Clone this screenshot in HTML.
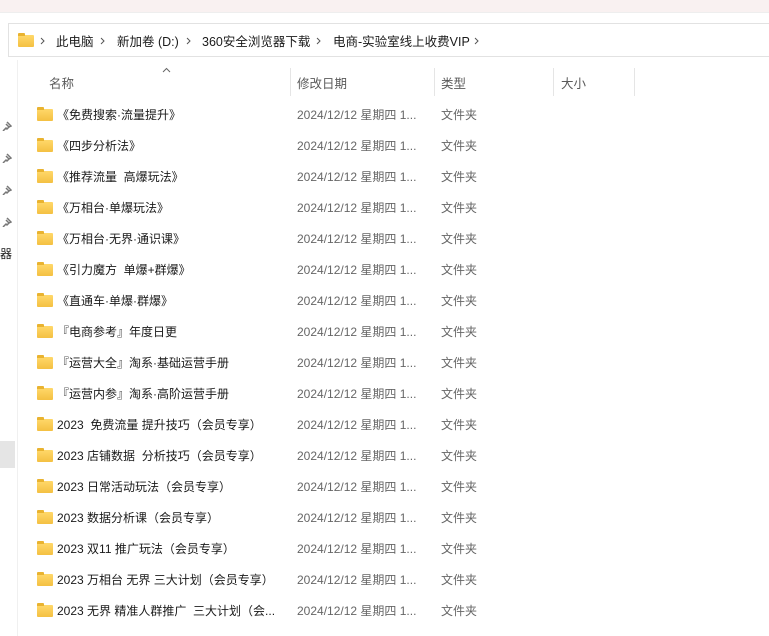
<html><head><style>
body{margin:0;width:769px;height:636px;background:#fff;font-family:"Liberation Sans","Noto Sans CJK SC",sans-serif;font-size:12px;color:#1a1a1a;position:relative;overflow:hidden}
.top{position:absolute;left:0;top:0;width:769px;height:12px;background:#f9f1f1;border-bottom:1px solid #eee}
.bc{position:absolute;left:8px;top:23px;width:770px;height:34px;border:1px solid #e2e2e2;box-sizing:border-box;background:#fff}
.bc span{position:absolute;top:7px;font-size:12.5px}
.bc svg{position:absolute;top:13px}
.fold{position:absolute;width:16px;height:12px;background:linear-gradient(#ffd86a,#f4c042);border-radius:1px}
.fold:before{content:"";position:absolute;left:0;top:-2px;width:7px;height:3px;background:#e9b330;border-radius:1px 1px 0 0}
.lp{position:absolute;left:17px;top:60px;width:1px;height:576px;background:#f0f0f0}
.hdr{position:absolute;top:73px;color:#5a5a5a;font-size:12.5px}
.sep{position:absolute;top:68px;width:1px;height:28px;background:#e5e5e5}
.row{position:absolute;left:0;width:769px;height:20px}
.row .n{position:absolute;left:57px;top:0}
.row .d{position:absolute;left:297px;top:0;color:#666}
.row .t{position:absolute;left:441px;top:0;color:#666}
.pin{position:absolute;left:2px}
</style></head><body>
<div class="top"></div>
<div class="bc">
<div class="fold" style="left:9px;top:11px"></div>
<svg style="left:31px" width="5" height="8"><path d="M1 1l3 3-3 3" stroke="#555" fill="none"/></svg>
<span style="left:47px">此电脑</span><svg style="left:91px" width="5" height="8"><path d="M1 1l3 3-3 3" stroke="#555" fill="none"/></svg>
<span style="left:108px">新加卷 (D:)</span><svg style="left:177px" width="5" height="8"><path d="M1 1l3 3-3 3" stroke="#555" fill="none"/></svg>
<span style="left:193px">360安全浏览器下载</span><svg style="left:307px" width="5" height="8"><path d="M1 1l3 3-3 3" stroke="#555" fill="none"/></svg>
<span style="left:324px">电商-实验室线上收费VIP</span><svg style="left:465px" width="5" height="8"><path d="M1 1l3 3-3 3" stroke="#555" fill="none"/></svg>
</div>
<div class="lp"></div>
<svg class="pin" style="top:121px" width="10" height="10"><path d="M5 1l4 4-2 1-2 2-1-1-3 3M4 3l3 3" stroke="#777" stroke-width="1.5" fill="none"/></svg>
<svg class="pin" style="top:153px" width="10" height="10"><path d="M5 1l4 4-2 1-2 2-1-1-3 3M4 3l3 3" stroke="#777" stroke-width="1.5" fill="none"/></svg>
<svg class="pin" style="top:185px" width="10" height="10"><path d="M5 1l4 4-2 1-2 2-1-1-3 3M4 3l3 3" stroke="#777" stroke-width="1.5" fill="none"/></svg>
<svg class="pin" style="top:217px" width="10" height="10"><path d="M5 1l4 4-2 1-2 2-1-1-3 3M4 3l3 3" stroke="#777" stroke-width="1.5" fill="none"/></svg>
<div style="position:absolute;left:0;top:245px;font-size:12px">器</div>
<div style="position:absolute;left:0;top:441px;width:15px;height:27px;background:#e5e5e5"></div>
<svg style="position:absolute;left:162px;top:67px" width="9" height="6"><path d="M1 5l3.5-3.5L8 5" stroke="#666" fill="none"/></svg>
<div class="hdr" style="left:49px">名称</div>
<div class="sep" style="left:290px"></div><div class="hdr" style="left:297px">修改日期</div>
<div class="sep" style="left:434px"></div><div class="hdr" style="left:441px">类型</div>
<div class="sep" style="left:553px"></div><div class="hdr" style="left:561px">大小</div>
<div class="sep" style="left:634px"></div>
<div class="row" style="top:106px"><div class="fold" style="left:37px;top:3px"></div><span class="n">《免费搜索·流量提升》</span><span class="d">2024/12/12 星期四 1...</span><span class="t">文件夹</span></div>
<div class="row" style="top:137px"><div class="fold" style="left:37px;top:3px"></div><span class="n">《四步分析法》</span><span class="d">2024/12/12 星期四 1...</span><span class="t">文件夹</span></div>
<div class="row" style="top:168px"><div class="fold" style="left:37px;top:3px"></div><span class="n">《推荐流量&nbsp; 高爆玩法》</span><span class="d">2024/12/12 星期四 1...</span><span class="t">文件夹</span></div>
<div class="row" style="top:199px"><div class="fold" style="left:37px;top:3px"></div><span class="n">《万相台·单爆玩法》</span><span class="d">2024/12/12 星期四 1...</span><span class="t">文件夹</span></div>
<div class="row" style="top:230px"><div class="fold" style="left:37px;top:3px"></div><span class="n">《万相台·无界·通识课》</span><span class="d">2024/12/12 星期四 1...</span><span class="t">文件夹</span></div>
<div class="row" style="top:261px"><div class="fold" style="left:37px;top:3px"></div><span class="n">《引力魔方&nbsp; 单爆+群爆》</span><span class="d">2024/12/12 星期四 1...</span><span class="t">文件夹</span></div>
<div class="row" style="top:292px"><div class="fold" style="left:37px;top:3px"></div><span class="n">《直通车·单爆·群爆》</span><span class="d">2024/12/12 星期四 1...</span><span class="t">文件夹</span></div>
<div class="row" style="top:323px"><div class="fold" style="left:37px;top:3px"></div><span class="n">『电商参考』年度日更</span><span class="d">2024/12/12 星期四 1...</span><span class="t">文件夹</span></div>
<div class="row" style="top:354px"><div class="fold" style="left:37px;top:3px"></div><span class="n">『运营大全』淘系·基础运营手册</span><span class="d">2024/12/12 星期四 1...</span><span class="t">文件夹</span></div>
<div class="row" style="top:385px"><div class="fold" style="left:37px;top:3px"></div><span class="n">『运营内参』淘系·高阶运营手册</span><span class="d">2024/12/12 星期四 1...</span><span class="t">文件夹</span></div>
<div class="row" style="top:416px"><div class="fold" style="left:37px;top:3px"></div><span class="n">2023&nbsp; 免费流量 提升技巧（会员专享）</span><span class="d">2024/12/12 星期四 1...</span><span class="t">文件夹</span></div>
<div class="row" style="top:447px"><div class="fold" style="left:37px;top:3px"></div><span class="n">2023 店铺数据&nbsp; 分析技巧（会员专享）</span><span class="d">2024/12/12 星期四 1...</span><span class="t">文件夹</span></div>
<div class="row" style="top:478px"><div class="fold" style="left:37px;top:3px"></div><span class="n">2023 日常活动玩法（会员专享）</span><span class="d">2024/12/12 星期四 1...</span><span class="t">文件夹</span></div>
<div class="row" style="top:509px"><div class="fold" style="left:37px;top:3px"></div><span class="n">2023 数据分析课（会员专享）</span><span class="d">2024/12/12 星期四 1...</span><span class="t">文件夹</span></div>
<div class="row" style="top:540px"><div class="fold" style="left:37px;top:3px"></div><span class="n">2023 双11 推广玩法（会员专享）</span><span class="d">2024/12/12 星期四 1...</span><span class="t">文件夹</span></div>
<div class="row" style="top:571px"><div class="fold" style="left:37px;top:3px"></div><span class="n">2023 万相台 无界 三大计划（会员专享）</span><span class="d">2024/12/12 星期四 1...</span><span class="t">文件夹</span></div>
<div class="row" style="top:602px"><div class="fold" style="left:37px;top:3px"></div><span class="n">2023 无界 精准人群推广&nbsp; 三大计划（会...</span><span class="d">2024/12/12 星期四 1...</span><span class="t">文件夹</span></div>
</body></html>
